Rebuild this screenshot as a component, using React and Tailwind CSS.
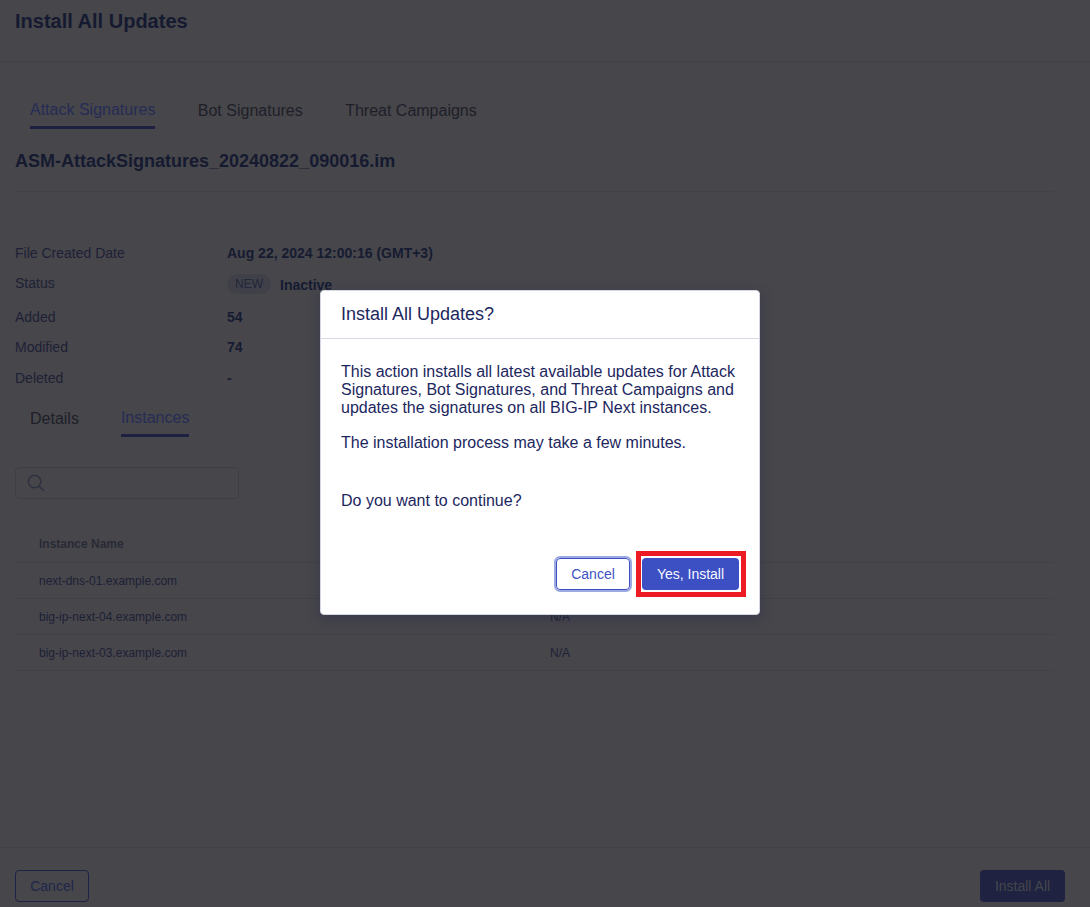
const details = [
  { label: 'File Created Date', value: 'Aug 22, 2024 12:00:16 (GMT+3)', height: 'h-[30px]' },
  { label: 'Status', value: 'Inactive', badge: 'NEW', height: 'h-[31px]' },
  { label: 'Added', value: '54', height: 'h-[36px]' },
  { label: 'Modified', value: '74', height: 'h-[24px]' },
  { label: 'Deleted', value: '-', height: 'h-[38px]' },
];

const instances = ['next-dns-01.example.com', 'big-ip-next-04.example.com', 'big-ip-next-03.example.com'];

function Tab({ children, active }) {
  return active ? (
    <button className="block border-b-3 border-[#1d2040] pb-[7px] leading-[18px] text-[#262c55]">{children}</button>
  ) : (
    <button className="block pt-px leading-[18px] text-[#1e1f28]">{children}</button>
  );
}

function Modal() {
  return (
    <div
      role="dialog"
      className="absolute top-[290px] left-[320px] flex h-[325px] w-[440px] flex-col rounded border border-[#d5d7e4] bg-white text-[#1c2760] shadow-[0_4px_14px_rgba(34,40,75,0.4)]"
    >
      <h2 className="flex h-12 shrink-0 items-center border-b border-[#d7d9e4] px-5 pb-[2px] text-lg">
        Install All Updates?
      </h2>
      <div className="flex-1 px-5 pt-6 text-base leading-[18px]">
        <p>
          This action installs all latest available updates for Attack
          <br />
          Signatures, Bot Signatures, and Threat Campaigns and
          <br />
          updates the signatures on all BIG-IP Next instances.
        </p>
        <p className="mt-[17px]">The installation process may take a few minutes.</p>
        <p className="mt-10">Do you want to continue?</p>
      </div>
      <div className="flex items-center justify-end gap-1 pr-[13px] pb-[17px] text-sm">
        <button className="h-9 w-[78px] rounded-md border-2 border-[#9da9e1] bg-white p-0 text-[#3d53c4]">
          <span className="flex h-full w-full items-center justify-center rounded border border-[#3c50c3]">Cancel</span>
        </button>
        <div className="border-5 border-[#ed1c24] py-[2px] pr-[2px] pl-px">
          <button className="block h-8 w-[97px] rounded bg-[#3c50c4] text-[#f7f8ff]">Yes, Install</button>
        </div>
      </div>
    </div>
  );
}

export default function App() {
  return (
    <div className="relative flex h-[907px] w-[1090px] flex-col overflow-hidden bg-[#47464b] font-['Liberation_Sans',Arial,sans-serif] text-sm text-[#1d2135]">
      <header className="h-[62px] shrink-0 border-b border-[#424147] pt-2 pl-[15px]">
        <h1 className="text-xl leading-[26px] font-bold text-[#151a30]">Install All Updates</h1>
      </header>

      <main className="flex flex-1 flex-col pr-[36px] pl-[15px]">
        <nav className="mt-[39px] flex items-start gap-[42.4px] pl-[15px] text-base">
          <Tab active>Attack Signatures</Tab>
          <Tab>Bot Signatures</Tab>
          <Tab>Threat Campaigns</Tab>
        </nav>
        <h2 className="mt-5 h-[43px] border-b border-[#424147] text-lg leading-6 font-bold text-[#151a30]">
          ASM-AttackSignatures_20240822_090016.im
        </h2>

        <dl className="mt-[46px]">
          {details.map((item) => (
            <div key={item.label} className={`flex ${item.height} items-center`}>
              <dt className={item.badge ? 'w-[212px] pb-[2px]' : 'w-[212px]'}>{item.label}</dt>
              <dd className="flex items-center font-bold text-[#161b31]">
                {item.badge && (
                  <span className="mr-[9px] flex h-5 w-11 items-center justify-center rounded-full bg-[#404148] text-xs font-normal text-[#20263c]">
                    {item.badge}
                  </span>
                )}
                <span className={item.badge ? 'pt-[2px]' : ''}>{item.value}</span>
              </dd>
            </div>
          ))}
        </dl>

        <nav className="mt-3 flex items-start gap-[42px] pl-[15px] text-base">
          <Tab>Details</Tab>
          <Tab active>Instances</Tab>
        </nav>

        <div className="mt-[30px] flex h-8 w-56 items-center rounded border border-[#3f3e45] pl-[11px]">
          <svg width="18" height="18" viewBox="0 0 18 18" fill="none" stroke="#2d303e" strokeWidth="1.4">
            <circle cx="7.6" cy="7.6" r="6.2" />
            <path d="M12 12 17 17" />
          </svg>
        </div>

        <table className="mt-[26px] w-full table-fixed text-left text-xs">
          <thead>
            <tr className="h-[37px] border-b border-[#424147] text-[#292b34]">
              <th className="w-[511px] pt-[2px] pl-6 font-bold">Instance Name</th>
              <th />
            </tr>
          </thead>
          <tbody>
            {instances.map((name) => (
              <tr key={name} className="h-9 border-b border-[#424147]">
                <td className="pt-[2px] pl-6">{name}</td>
                <td className="pt-[2px] pl-6">N/A</td>
              </tr>
            ))}
          </tbody>
        </table>
      </main>

      <footer className="flex h-[60px] shrink-0 items-start justify-between border-t border-[#424147] pt-[22px] pr-[25px] pl-[15px]">
        <button className="h-8 w-[74px] rounded border border-[#1e2148] text-[#20264b]">Cancel</button>
        <button className="h-8 w-[85px] rounded bg-[#1f2241] text-[#45464b]">Install All</button>
      </footer>

      <Modal />
    </div>
  );
}
